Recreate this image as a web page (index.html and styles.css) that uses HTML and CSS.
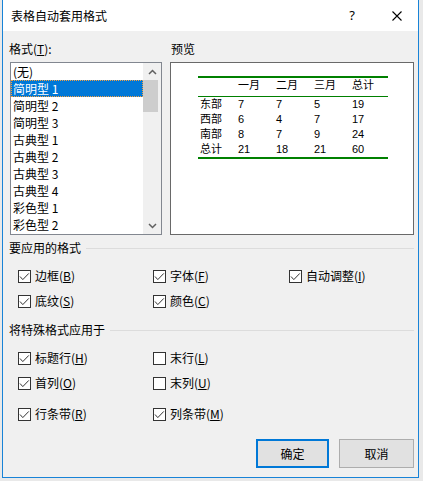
FILE: index.html
```html
<!DOCTYPE html>
<html lang="zh-CN">
<head>
<meta charset="utf-8">
<title>表格自动套用格式</title>
<link rel="stylesheet" href="styles.css">
</head>
<body>
<div class="dialog">
  <div class="titlebar">
    <span class="title">表格自动套用格式</span>
    <span class="tb-btn help">?</span>
    <span class="tb-btn close"><svg width="10" height="10" viewBox="0 0 10 10"><path d="M0.5 0.5L9.5 9.5M9.5 0.5L0.5 9.5" stroke="#000" stroke-width="1.1" fill="none"/></svg></span>
  </div>
  <div class="content">
    <div class="top">
      <div class="col-list">
        <div class="label">格式(<u>T</u>):</div>
        <div class="listbox">
          <ul class="items">
            <li>(无)</li>
            <li class="sel">简明型 1</li>
            <li>简明型 2</li>
            <li>简明型 3</li>
            <li>古典型 1</li>
            <li>古典型 2</li>
            <li>古典型 3</li>
            <li>古典型 4</li>
            <li>彩色型 1</li>
            <li>彩色型 2</li>
          </ul>
          <div class="scrollbar">
            <span class="arrow"><svg width="9" height="6" viewBox="0 0 9 6"><path d="M1 5L4.5 1.5L8 5" stroke="#606060" stroke-width="1.5" fill="none"/></svg></span>
            <div class="track"><div class="thumb"></div></div>
            <span class="arrow"><svg width="9" height="6" viewBox="0 0 9 6"><path d="M1 1L4.5 4.5L8 1" stroke="#606060" stroke-width="1.5" fill="none"/></svg></span>
          </div>
        </div>
      </div>
      <div class="col-preview">
        <div class="label pl">预览</div>
        <div class="preview">
          <div class="ptable">
            <div class="prow head"><span></span><span>一月</span><span>二月</span><span>三月</span><span>总计</span></div>
            <div class="prow"><span>东部</span><span>7</span><span>7</span><span>5</span><span>19</span></div>
            <div class="prow"><span>西部</span><span>6</span><span>4</span><span>7</span><span>17</span></div>
            <div class="prow"><span>南部</span><span>8</span><span>7</span><span>9</span><span>24</span></div>
            <div class="prow"><span>总计</span><span>21</span><span>18</span><span>21</span><span>60</span></div>
          </div>
        </div>
      </div>
    </div>

    <div class="group-head g1"><span>要应用的格式</span><i class="rule"></i></div>
    <div class="crow r-first">
      <label class="cb"><span class="box"><svg width="11" height="11" viewBox="0 0 11 11"><path d="M1 5.5L3.8 8.6L9.8 2.4" stroke="#333" stroke-width="1" fill="none"/></svg></span><span class="txt">边框(<u>B</u>)</span></label>
      <label class="cb"><span class="box"><svg width="11" height="11" viewBox="0 0 11 11"><path d="M1 5.5L3.8 8.6L9.8 2.4" stroke="#333" stroke-width="1" fill="none"/></svg></span><span class="txt">字体(<u>F</u>)</span></label>
      <label class="cb"><span class="box"><svg width="11" height="11" viewBox="0 0 11 11"><path d="M1 5.5L3.8 8.6L9.8 2.4" stroke="#333" stroke-width="1" fill="none"/></svg></span><span class="txt">自动调整(<u>I</u>)</span></label>
    </div>
    <div class="crow r-next">
      <label class="cb"><span class="box"><svg width="11" height="11" viewBox="0 0 11 11"><path d="M1 5.5L3.8 8.6L9.8 2.4" stroke="#333" stroke-width="1" fill="none"/></svg></span><span class="txt">底纹(<u>S</u>)</span></label>
      <label class="cb"><span class="box"><svg width="11" height="11" viewBox="0 0 11 11"><path d="M1 5.5L3.8 8.6L9.8 2.4" stroke="#333" stroke-width="1" fill="none"/></svg></span><span class="txt">颜色(<u>C</u>)</span></label>
    </div>

    <div class="group-head g2"><span>将特殊格式应用于</span><i class="rule"></i></div>
    <div class="crow r-first">
      <label class="cb"><span class="box"><svg width="11" height="11" viewBox="0 0 11 11"><path d="M1 5.5L3.8 8.6L9.8 2.4" stroke="#333" stroke-width="1" fill="none"/></svg></span><span class="txt">标题行(<u>H</u>)</span></label>
      <label class="cb"><span class="box"></span><span class="txt">末行(<u>L</u>)</span></label>
    </div>
    <div class="crow r-next">
      <label class="cb"><span class="box"><svg width="11" height="11" viewBox="0 0 11 11"><path d="M1 5.5L3.8 8.6L9.8 2.4" stroke="#333" stroke-width="1" fill="none"/></svg></span><span class="txt">首列(<u>O</u>)</span></label>
      <label class="cb"><span class="box"></span><span class="txt">末列(<u>U</u>)</span></label>
    </div>
    <div class="crow r-wide">
      <label class="cb"><span class="box"><svg width="11" height="11" viewBox="0 0 11 11"><path d="M1 5.5L3.8 8.6L9.8 2.4" stroke="#333" stroke-width="1" fill="none"/></svg></span><span class="txt">行条带(<u>R</u>)</span></label>
      <label class="cb"><span class="box"><svg width="11" height="11" viewBox="0 0 11 11"><path d="M1 5.5L3.8 8.6L9.8 2.4" stroke="#333" stroke-width="1" fill="none"/></svg></span><span class="txt">列条带(<u>M</u>)</span></label>
    </div>

    <div class="btns">
      <span class="btn default">确定</span>
      <span class="btn">取消</span>
    </div>
  </div>
</div>
</body>
</html>
```

FILE: styles.css
```css
* {
  box-sizing: border-box;
  margin: 0;
  padding: 0;
}

html, body {
  width: 423px;
  height: 481px;
  overflow: hidden;
}

body {
  background: #e9e9e9;
  font-family: "Noto Sans CJK SC", "Noto Sans", sans-serif;
  font-size: 12px;
  color: #000;
}

u {
  text-decoration: underline;
  text-underline-offset: 1px;
}

.dialog {
  margin-left: 2px;
  width: 417px;
  height: 478px;
  border: 1px solid #1883d7;
  border-top: 0;
  background: #f0f0f0;
}

.titlebar {
  height: 31px;
  background: #fff;
  display: flex;
}

.title {
  flex: 1;
  padding-left: 8px;
  line-height: 31px;
}

.tb-btn {
  width: 45px;
  padding-left: 3px;
  display: flex;
  align-items: center;
  justify-content: center;
}

.help {
  font-family: "Noto Sans", sans-serif;
  font-size: 13px;
  line-height: 31px;
}

.content {
  padding: 10px 4px 0 6px;
}

.top {
  display: flex;
}

.col-list {
  width: 161px;
}

.col-preview {
  flex: 1;
}

.label {
  height: 16px;
  line-height: 16px;
  white-space: nowrap;
}

.label.pl {
  padding-left: 1px;
}

.listbox {
  margin: 5px 0 0 1px;
  width: 152px;
  height: 173px;
  border: 1px solid #828790;
  background: #fff;
  display: flex;
}

.items {
  list-style: none;
  width: 132px;
}

.items li {
  height: 17px;
  line-height: 17px;
  padding-left: 2px;
  white-space: nowrap;
}

.items li.sel {
  background: #0078d7;
  color: #fff;
  outline: 1px dotted #f5a142;
  outline-offset: -1px;
}

.scrollbar {
  width: 18px;
  background: #f0f0f0;
  display: flex;
  flex-direction: column;
}

.arrow {
  height: 17px;
  display: flex;
  align-items: center;
  justify-content: center;
}

.track {
  flex: 1;
}

.thumb {
  width: 15px;
  height: 32px;
  background: #cdcdcd;
}

.preview {
  margin-top: 5px;
  width: 244px;
  height: 173px;
  border: 1px solid #696969;
  background: #fff;
  padding: 13px 0 0 27px;
}

.ptable {
  width: 190px;
  border-top: 2px solid #008000;
  border-bottom: 2px solid #008000;
  font-family: "Liberation Sans", "Noto Sans CJK SC", sans-serif;
  font-size: 11px;
}

.prow {
  display: grid;
  grid-template-columns: repeat(5, 38px);
}

.prow span {
  padding-left: 2px;
  height: 15px;
  line-height: 15px;
  white-space: nowrap;
}

.prow.head {
  border-bottom: 1px solid #008000;
}

.prow.head span {
  height: 18px;
  line-height: 14px;
  padding-bottom: 4px;
}

.group-head {
  display: flex;
  align-items: center;
  height: 16px;
  line-height: 16px;
  white-space: nowrap;
}

.group-head.g1 {
  margin-top: 5px;
}

.group-head.g2 {
  margin-top: 13px;
}

.rule {
  flex: 1;
  height: 1px;
  margin-left: 5px;
  background: #dcdcdc;
}

.crow {
  display: grid;
  grid-template-columns: 135px 136px auto;
  margin-left: 9px;
  height: 16px;
}

.crow.r-first {
  margin-top: 12px;
}

.crow.r-next {
  margin-top: 9px;
}

.crow.r-wide {
  margin-top: 15px;
}

.cb {
  display: flex;
  align-items: center;
  gap: 4px;
  line-height: 16px;
  white-space: nowrap;
}

.box {
  flex: none;
  width: 13px;
  height: 13px;
  border: 1px solid #333;
  background: #fff;
  display: flex;
}

.btns {
  display: flex;
  justify-content: flex-end;
  gap: 10px;
  margin-top: 17px;
}

.btn {
  width: 75px;
  height: 29px;
  background: #e1e1e1;
  border: 1px solid #adadad;
  display: flex;
  align-items: center;
  justify-content: center;
}

.btn.default {
  width: 73px;
  border: 2px solid #0078d7;
}
```
